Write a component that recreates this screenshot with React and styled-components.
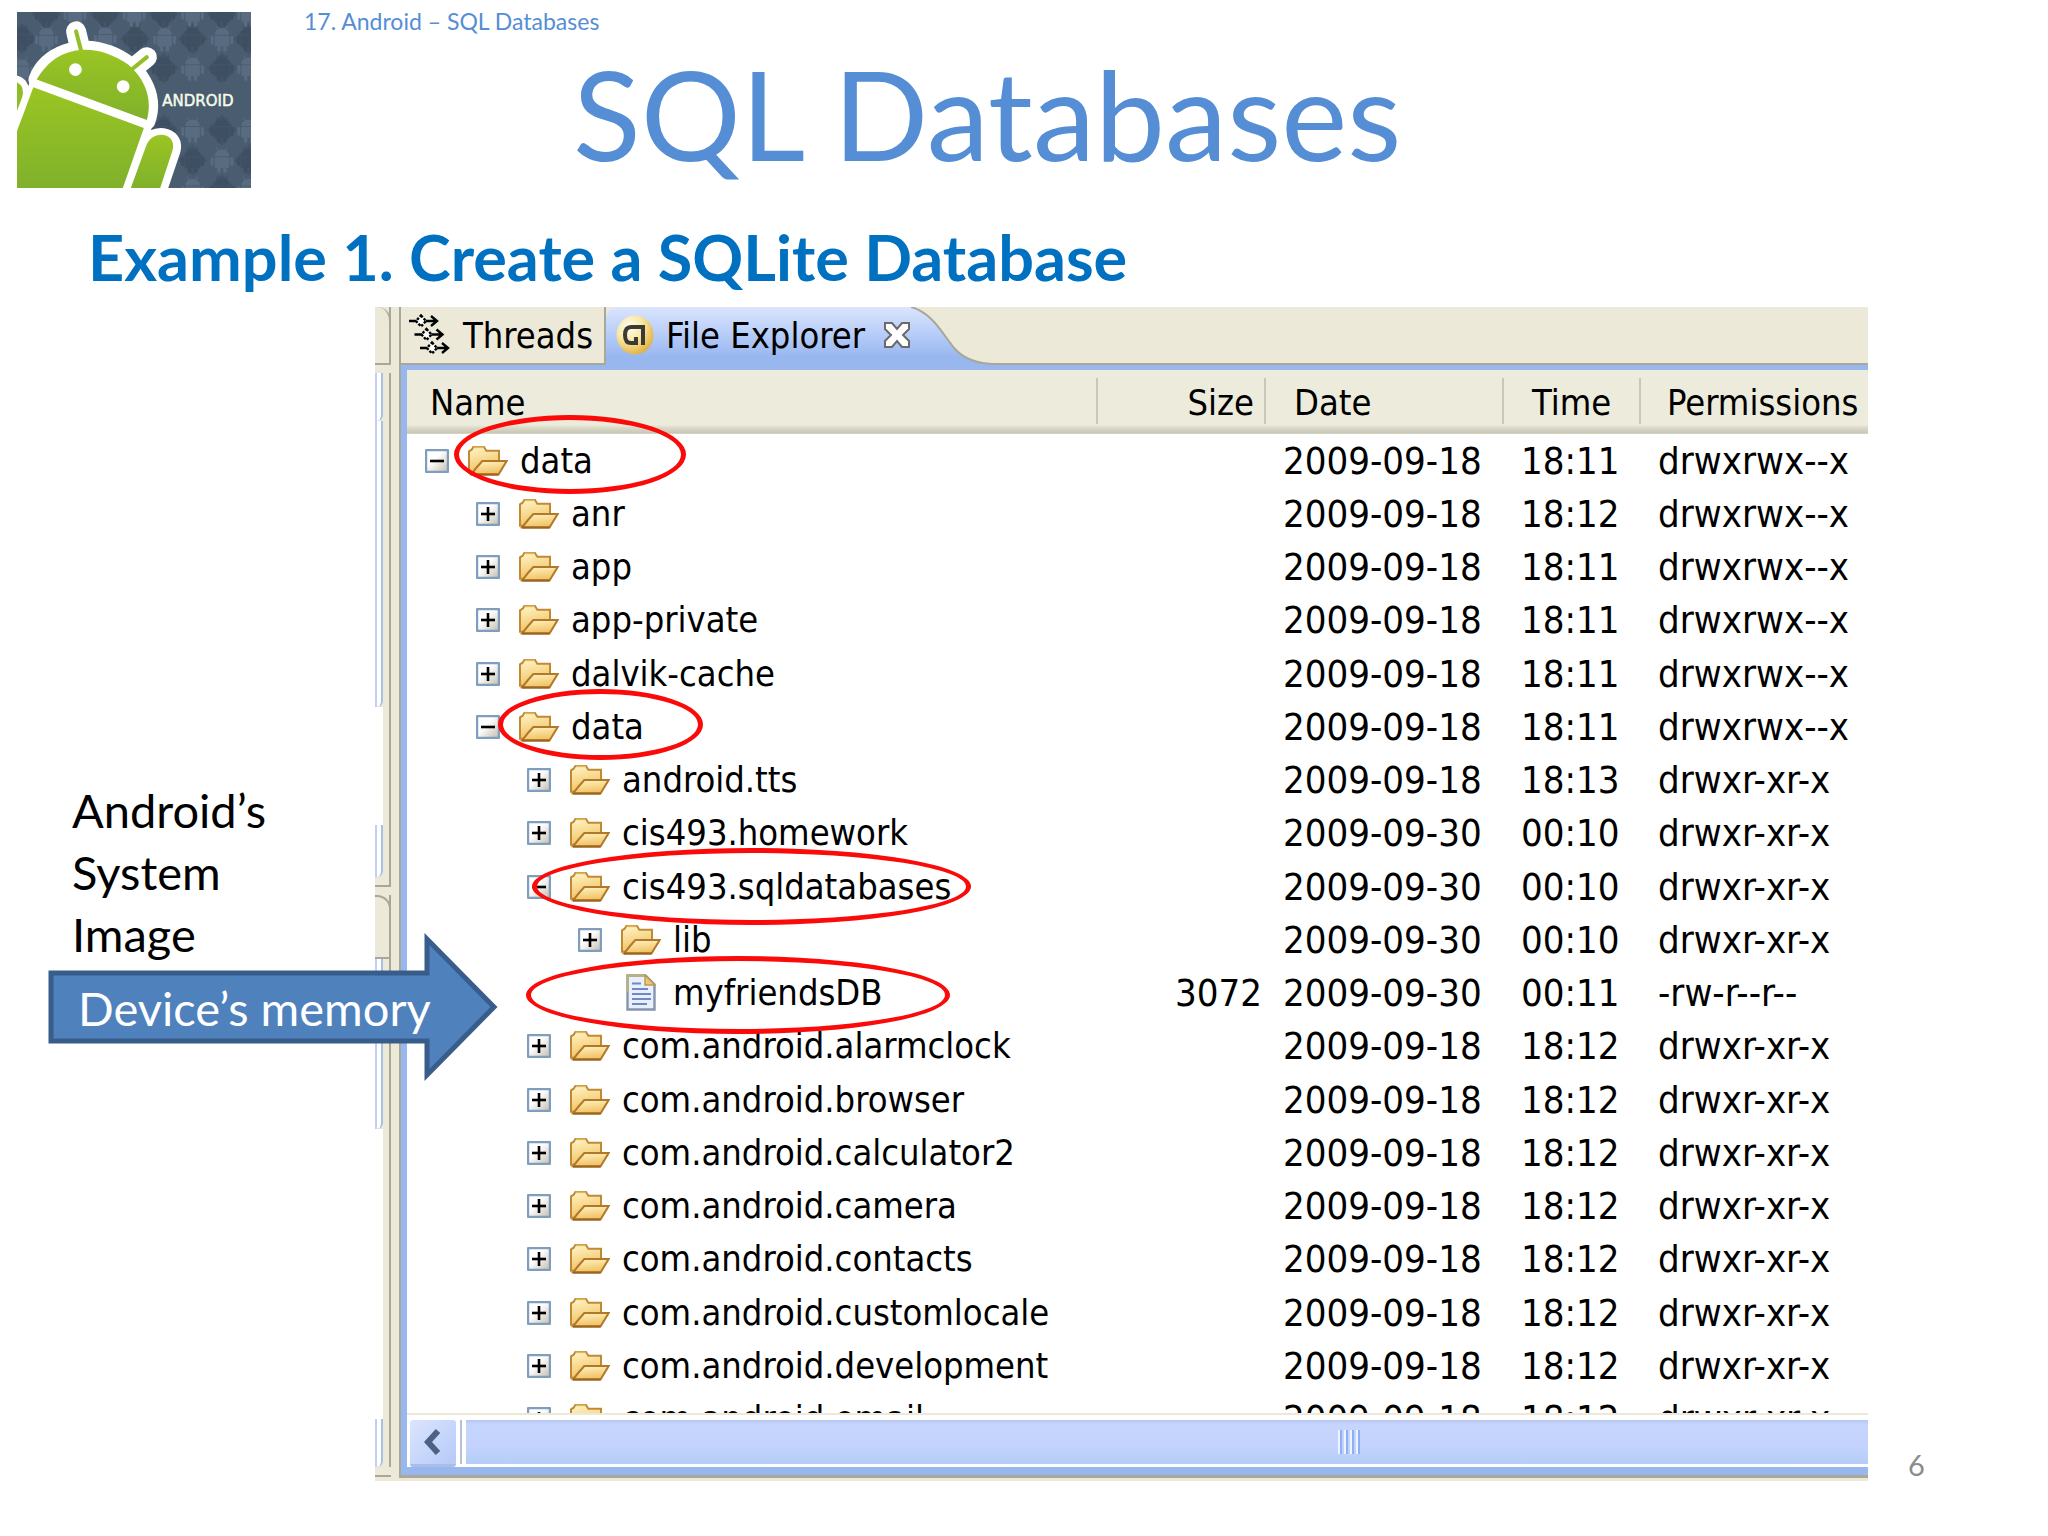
import React, { useState } from "react";
import styled, { createGlobalStyle } from "styled-components";

const GlobalStyle = createGlobalStyle`
  * {
    box-sizing: border-box;
  }
  body {
    margin: 0;
    background: #ffffff;
    font-family: Lato, "Open Sans", sans-serif;
  }
  button {
    font: inherit;
    color: inherit;
    padding: 0;
    border: none;
    background: none;
    cursor: pointer;
  }
`;

const Slide = styled.main`
  position: relative;
  min-height: 100vh;
  overflow: hidden;
`;
const SlideHeader = styled.header`
  display: flex;
  align-items: flex-start;
  padding: 12px 0 0 17px;
  height: 208px;
`;
const HeaderTexts = styled.div`
  flex: 1;
  padding-left: 53px;
`;
const Chapter = styled.p`
  margin: 0;
  font-size: 23px;
  line-height: 18px;
  color: #558ed5;
`;
const Title = styled.h1`
  margin: 0;
  padding-left: 269px;
  font-size: 125px;
  font-weight: 400;
  line-height: 166px;
  white-space: nowrap;
  color: #558ed5;
`;
const Subtitle = styled.h2`
  margin: 0;
  padding-left: 88px;
  height: 99px;
  font-size: 63px;
  font-weight: 700;
  line-height: 98px;
  color: #0070c0;
`;
const Content = styled.div`
  display: flex;
  align-items: stretch;
`;
const Aside = styled.aside`
  flex: 0 0 375px;
  padding: 472px 60px 0 72px;
`;
const Note = styled.p`
  margin: 0;
  font-size: 47px;
  line-height: 62px;
  color: #000000;
`;
const PageNumber = styled.footer`
  flex: 0 0 180px;
  display: flex;
  align-items: flex-end;
  padding-left: 40px;
  font-size: 29px;
  line-height: 32px;
  color: #8c8c8c;
`;

const Arrow = styled.div`
  position: absolute;
  left: 48px;
  top: 932px;
  width: 450px;
  height: 150px;
  display: flex;
  align-items: center;
  svg {
    position: absolute;
    inset: 0;
  }
`;
const ArrowText = styled.span`
  position: relative;
  padding: 2px 0 0 30px;
  font-size: 47px;
  line-height: 60px;
  white-space: nowrap;
  color: #ffffff;
`;

const Screen = styled.section`
  flex: 1;
  min-width: 0;
  display: flex;
  height: 1174px;
  background: #ece9d8;
  font-family: "DejaVu Sans Condensed", "Noto Sans", sans-serif;
  font-size: 36px;
  color: #000000;
`;
const Neighbour = styled.div`
  flex: 0 0 16px;
  display: flex;
  flex-direction: column;
  border-right: 2px solid #a9a797;
  margin: 0 8px 4px 0;
  border-bottom: 2px solid #a9a797;
`;
const NeighbourTab = styled.div`
  flex: 0 0 ${(p) => p.$height}px;
  margin-right: -2px;
  background: #ece9d8;
  border-right: 2px solid #a9a797;
  border-bottom: 2px solid #a9a797;
  border-top: ${(p) => (p.$line ? "2px solid #a9a797" : "none")};
  border-top-right-radius: ${(p) => (p.$square ? "0" : "14px")};
`;
const Track = styled.div`
  flex: ${(p) => (p.$height ? `0 0 ${p.$height}px` : "1")};
  width: 8px;
  background: #ffffff;
`;
const TrackThumb = styled(Track)`
  border-left: 2px solid #c5ccf6;
  border-right: 2px solid #a8c0e4;
  border-bottom-right-radius: 6px;
`;
const Gap = styled.div`
  flex: 0 0 8px;
  margin-right: -2px;
  background: #ece9d8;
`;

const View = styled.div`
  flex: 1;
  min-width: 0;
  display: flex;
  flex-direction: column;
  margin-bottom: 3px;
  border-left: 2px solid #a9a797;
  border-bottom: 3px solid #aca899;
`;
const TabBar = styled.div`
  display: flex;
  height: 58px;
`;
const Tab = styled.button`
  display: flex;
  align-items: center;
  gap: 12px;
  width: 205px;
  padding: 0 0 0 8px;
  border-right: 2px solid #a9a797;
  border-bottom: 2px solid #a9a797;
  border-top-left-radius: 12px;
`;
const ActiveTab = styled.div`
  display: flex;
  align-items: center;
  width: 305px;
  padding: 0 0 2px 10px;
  background: linear-gradient(#dbe5fd, #b5cbf8 50%, #99b7ef 85%);
  border-top-left-radius: 12px;
`;
const TabLabel = styled.button`
  flex: 1;
  display: flex;
  align-items: center;
  gap: 12px;
  white-space: nowrap;
`;
const CloseButton = styled.button`
  display: flex;
`;
const TabTail = styled.svg`
  flex: 0 0 84px;
`;
const TabSpace = styled.div`
  flex: 1;
  border-bottom: 2px solid #a9a797;
`;
const Frame = styled.div`
  flex: 1;
  min-height: 0;
  display: flex;
  flex-direction: column;
  border: solid #99b7ef;
  border-width: 5px 0 8px 6px;
`;
const TableArea = styled.div`
  flex: 1;
  min-height: 0;
  overflow: hidden;
  background: #ffffff;
`;
const Table = styled.table`
  width: 100%;
  table-layout: fixed;
  border-collapse: collapse;
  border-spacing: 0;
`;
const Col = styled.col`
  width: ${(p) => (p.$width ? `${p.$width}px` : "auto")};
`;
const HeadCell = styled.th`
  height: 64px;
  padding: 0 0 2px;
  font-weight: 400;
  text-align: ${(p) => p.$align || "left"};
  background: linear-gradient(#ecebdc 86%, #dcdac8 90%, #c9c7b5 98%, #dddccb);
`;
const HeadLabel = styled.div`
  height: 46px;
  line-height: 50px;
  padding: ${(p) => p.$pad || "0 10px 0 28px"};
  border-right: ${(p) => (p.$last ? "none" : "2px solid #c9c7b8")};
  box-shadow: ${(p) => (p.$last ? "none" : "2px 0 0 #ffffff")};
`;
const Row = styled.tr`
  height: 53px;
  &:nth-child(4n) {
    height: 54px;
  }
`;
const Cell = styled.td`
  padding: ${(p) => p.$pad || "0 0 0 17px"};
  font-size: 38px;
  line-height: 52px;
  white-space: nowrap;
  text-align: ${(p) => p.$align || "left"};
`;
const NameCell = styled(Cell)`
  position: relative;
  padding: 0 0 0 18px;
  font-size: 36px;
`;
const Entry = styled.div`
  display: flex;
  align-items: center;
  margin-left: ${(p) => p.$level * 51}px;
`;
const Toggle = styled.button`
  display: flex;
  width: 24px;
  height: 24px;
  margin-right: 19px;
`;
const ToggleSpace = styled.span`
  width: 43px;
`;
const IconBox = styled.span`
  display: flex;
  justify-content: center;
  width: 40px;
  margin-right: 12px;
`;
const Mark = styled.span`
  position: absolute;
  z-index: 1;
  left: ${(p) => p.$left}px;
  top: ${(p) => p.$top}px;
  width: ${(p) => p.$width}px;
  height: ${(p) => p.$height}px;
  border: 5px solid #fb0a0a;
  border-radius: 50%;
  pointer-events: none;
`;

const ScrollBar = styled.div`
  flex: 0 0 54px;
  display: flex;
  gap: 10px;
  padding: 5px 0 3px 3px;
  border-top: 2px solid #ece9d8;
  background: #ffffff;
`;
const ScrollButton = styled.button`
  display: flex;
  align-items: center;
  justify-content: center;
  width: 46px;
  border-radius: 3px;
  background: linear-gradient(135deg, #dce5fe, #b5c9f8);
  box-shadow: 0 3px 0 #a9bfe6;
`;
const ScrollThumb = styled.div`
  flex: 1;
  display: flex;
  align-items: center;
  justify-content: center;
  gap: 2px;
  padding-left: 25%;
  background: linear-gradient(#b5c6f2, #c6d5fd 10%, #c3d3fd 60%, #b4cdf8);
  box-shadow: -4px 0 0 #ffffff, -6px 0 0 #b4c2d8;
`;
const Grip = styled.span`
  width: 4px;
  height: 24px;
  border-left: 2px solid #eef4fe;
  border-right: 2px solid #8cb0f8;
`;

const entries = [
  { name: "data", level: 0, open: true, time: "18:11", perm: "drwxrwx--x", mark: [47, -19, 232, 79] },
  { name: "anr", level: 1, time: "18:12", perm: "drwxrwx--x" },
  { name: "app", level: 1, time: "18:11", perm: "drwxrwx--x" },
  { name: "app-private", level: 1, time: "18:11", perm: "drwxrwx--x" },
  { name: "dalvik-cache", level: 1, time: "18:11", perm: "drwxrwx--x" },
  { name: "data", level: 1, open: true, time: "18:11", perm: "drwxrwx--x", mark: [91, -11, 205, 71] },
  { name: "android.tts", level: 2, time: "18:13", perm: "drwxr-xr-x" },
  { name: "cis493.homework", level: 2, date: "2009-09-30", time: "00:10", perm: "drwxr-xr-x" },
  { name: "cis493.sqldatabases", level: 2, open: true, date: "2009-09-30", time: "00:10", perm: "drwxr-xr-x", mark: [125, -12, 439, 77] },
  { name: "lib", level: 3, date: "2009-09-30", time: "00:10", perm: "drwxr-xr-x" },
  { name: "myfriendsDB", level: 3, file: true, size: "3072", date: "2009-09-30", time: "00:11", perm: "-rw-r--r--", mark: [119, -10, 424, 78] },
  { name: "com.android.alarmclock", level: 2, time: "18:12", perm: "drwxr-xr-x" },
  { name: "com.android.browser", level: 2, time: "18:12", perm: "drwxr-xr-x" },
  { name: "com.android.calculator2", level: 2, time: "18:12", perm: "drwxr-xr-x" },
  { name: "com.android.camera", level: 2, time: "18:12", perm: "drwxr-xr-x" },
  { name: "com.android.contacts", level: 2, time: "18:12", perm: "drwxr-xr-x" },
  { name: "com.android.customlocale", level: 2, time: "18:12", perm: "drwxr-xr-x" },
  { name: "com.android.development", level: 2, time: "18:12", perm: "drwxr-xr-x" },
  { name: "com.android.email", level: 2, time: "18:12", perm: "drwxr-xr-x" },
];

function ToggleIcon({ open }) {
  return (
    <svg width="24" height="24" viewBox="0 0 24 24">
      <defs>
        <linearGradient id="toggleFill" x1="0" y1="0" x2="1" y2="1">
          <stop offset="0.4" stopColor="#ffffff" />
          <stop offset="1" stopColor="#c3bcae" />
        </linearGradient>
      </defs>
      <rect x="1" y="1" width="22" height="22" rx="1" fill="url(#toggleFill)" stroke="#7f9dbc" strokeWidth="2.4" />
      <path d="M5 12h14" stroke="#000" strokeWidth="2.6" />
      {!open && <path d="M12 5v14" stroke="#000" strokeWidth="2.6" />}
    </svg>
  );
}

function FolderIcon() {
  return (
    <svg width="40" height="30" viewBox="0 0 120 90">
      <defs>
        <linearGradient id="folderFill" x1="0" y1="0" x2="0.3" y2="1">
          <stop offset="0" stopColor="#fff6c8" />
          <stop offset="1" stopColor="#f2c264" />
        </linearGradient>
      </defs>
      <path d="M3 80V16l8-5 5-8h32l7 11h38v66z" fill="url(#folderFill)" stroke="#c08a35" strokeWidth="6" />
      <path d="M17 4h30" stroke="#e0b860" strokeWidth="5" />
      <path d="M9 85l18-22 16-18h73L92 85z" fill="url(#folderFill)" stroke="#b07828" strokeWidth="6" />
      <path d="M9 86h83" stroke="#9a6420" strokeWidth="6" />
    </svg>
  );
}

function FileIcon() {
  return (
    <svg width="30" height="37" viewBox="0 0 30 37">
      <path d="M1.5 1.5h18l9 9v25h-27z" fill="#e9f0fc" stroke="#8594ae" strokeWidth="2.4" />
      <path d="M1.5 18V1.5h18" fill="none" stroke="#b9b27e" strokeWidth="2.4" />
      <path d="M19 1v10h10z" fill="#e8c878" stroke="#b99b54" strokeWidth="1.5" />
      <path d="M6 9.500h9M6 15h16M6 20h19M6 25h19M6 30h15" stroke="#7088c4" strokeWidth="2.2" />
    </svg>
  );
}

function ThreadsIcon() {
  return (
    <svg width="42" height="42" viewBox="0 0 42 42" fill="none" stroke="#000" strokeWidth="2.4">
      {[0, 1, 2].map((i) => (
        <g key={i} transform={`translate(${i * 5.5} ${i * 13.5})`}>
          <path d="M0 7h8M16 7h12M22 2l6 5-6 5" />
          <path d="M12 1.500l5 5.500-5 5.500-5-5.500z" fill="#fff" strokeDasharray="2.500 1.500" />
        </g>
      ))}
    </svg>
  );
}

function ExplorerIcon() {
  return (
    <svg width="38" height="40" viewBox="0 0 38 40">
      <defs>
        <radialGradient id="orb" cx="0.35" cy="0.3" r="0.75">
          <stop offset="0" stopColor="#fffef0" />
          <stop offset="0.5" stopColor="#f8e6a0" />
          <stop offset="1" stopColor="#e2ae3c" />
        </radialGradient>
      </defs>
      <ellipse cx="19" cy="20" rx="18.500" ry="19.500" fill="url(#orb)" />
      <path d="M27 30V12H15q-6 0-6 8t6 8h5v-6" fill="none" stroke="#3d3a35" strokeWidth="4" />
    </svg>
  );
}

function CloseIcon() {
  return (
    <svg width="28" height="28" viewBox="0 0 28 28">
      <path
        d="M2 2h7l5 6 5-6h7v6l-6 6 6 6v6h-7l-5-6-5 6H2v-6l6-6-6-6z"
        fill="#fff"
        stroke="#6c6a66"
        strokeWidth="2"
      />
    </svg>
  );
}

const lightDroids = [
  [109, 102], [285, 100], [463, 102], [635, 102], [195, 28], [372, 28], [547, 28], [715, 28],
  [547, 190], [715, 190], [547, 375], [715, 375], [635, 465], [547, 552], [715, 552], [35, 195],
];
const darkDroids = [
  [375, 102], [547, 102], [715, 102], [460, 190], [635, 190], [635, 375], [460, 375], [547, 465],
  [715, 465], [635, 552], [35, 100], [109, 28], [285, 28], [460, 28], [635, 28],
];

function MiniDroid({ x, y, fill }) {
  return (
    <g transform={`translate(${x} ${y})`} fill={fill}>
      <path d="M-22-12a22 20 0 0 1 44 0z" />
      <path d="M-16-38l6 10M16-38l-6 10" stroke={fill} strokeWidth="3" />
      <rect x="-22" y="-9" width="44" height="32" rx="4" />
      <rect x="-34" y="-9" width="9" height="26" rx="4" />
      <rect x="25" y="-9" width="9" height="26" rx="4" />
      <rect x="-14" y="20" width="10" height="18" rx="4" />
      <rect x="4" y="20" width="10" height="18" rx="4" />
    </g>
  );
}

function AndroidLogo() {
  return (
    <svg width="234" height="176" viewBox="21 22 701 526" preserveAspectRatio="none" role="img" aria-label="Android">
      <defs>
        <linearGradient id="droid" x1="0" y1="0" x2="0" y2="1">
          <stop offset="0" stopColor="#9ac523" />
          <stop offset="1" stopColor="#80b12b" />
        </linearGradient>
      </defs>
      <rect x="21" y="22" width="701" height="526" fill="#4a5c70" />
      {darkDroids.map(([x, y]) => (
        <g key={`${x}-${y}`}>
          <path d={`M${x} ${y - 46}l44 46-44 46-44-46z`} fill="#435468" />
          <MiniDroid x={x} y={y} fill="#3f4f62" />
        </g>
      ))}
      {lightDroids.map(([x, y]) => (
        <MiniDroid key={`${x}-${y}`} x={x} y={y} fill="#586b81" />
      ))}
      <g stroke="#fff" fill="none" strokeLinecap="round">
        <path d="M198 80l17 70M410 157l-52 42" strokeWidth="60" />
        <path d="M78 224A178 152 20.800 0 1 412 350z" fill="#fff" strokeWidth="46" strokeLinejoin="round" />
        <path d="M70 240L0 420V580H350L412 365z" fill="#fff" strokeWidth="26" />
        <path d="M350 580L408 420C425 378 500 385 487 435L438 580z" fill="#fff" strokeWidth="48" />
        <path d="M0 226Q48 226 38 275L0 370" fill="#fff" strokeWidth="34" />
      </g>
      <path d="M198 80l17 65M410 157l-52 42" stroke="#93be28" strokeWidth="12" strokeLinecap="round" />
      <path d="M80 224C135 125 250 105 355 180C412 230 425 290 410 345z" fill="url(#droid)" />
      <path d="M70 247L401 369L338 548H21V378z" fill="url(#droid)" />
      <path d="M362 548L408 422C426 370 502 382 487 435L450 548z" fill="url(#droid)" />
      <path d="M21 232Q46 245 36 278L21 318z" fill="#8fbd27" />
      <circle cx="196" cy="194" r="19" fill="#fff" />
      <circle cx="339" cy="245" r="19" fill="#fff" />
      <text x="456" y="302" fontFamily="DejaVu Sans, sans-serif" fontSize="45" fill="#f4fbe6" stroke="#f4fbe6" strokeWidth="1.5">
        ANDROID
      </text>
    </svg>
  );
}

function FileRow({ entry }) {
  const [open, setOpen] = useState(Boolean(entry.open));
  const { name, level, file, size, date = "2009-09-18", time, perm, mark } = entry;

  return (
    <Row>
      <NameCell>
        <Entry $level={level}>
          {file ? (
            <ToggleSpace />
          ) : (
            <Toggle
              aria-label={`${open ? "Collapse" : "Expand"} ${name}`}
              aria-expanded={open}
              onClick={() => setOpen(!open)}
            >
              <ToggleIcon open={open} />
            </Toggle>
          )}
          <IconBox>{file ? <FileIcon /> : <FolderIcon />}</IconBox>
          {name}
        </Entry>
        {mark && <Mark $left={mark[0]} $top={mark[1]} $width={mark[2]} $height={mark[3]} />}
      </NameCell>
      <Cell $align="right" $pad="0 4px 0 0">
        {size}
      </Cell>
      <Cell>{date}</Cell>
      <Cell>{time}</Cell>
      <Cell>{perm}</Cell>
    </Row>
  );
}

export default function App() {
  return (
    <Slide>
      <GlobalStyle />
      <SlideHeader>
        <AndroidLogo />
        <HeaderTexts>
          <Chapter>17. Android – SQL Databases</Chapter>
          <Title>SQL Databases</Title>
        </HeaderTexts>
      </SlideHeader>
      <Subtitle>Example 1. Create a SQLite Database</Subtitle>
      <Content>
        <Aside>
          <Note>
            Android’s
            <br />
            System
            <br />
            Image
          </Note>
        </Aside>
        <Screen>
          <Neighbour>
            <NeighbourTab $height={58} />
            <Gap />
            <TrackThumb $height={48} />
            <TrackThumb $height={286} />
            <Track $height={118} />
            <TrackThumb $height={52} />
            <NeighbourTab $height={10} $square />
            <Gap />
            <NeighbourTab $height={64} $line />
            <TrackThumb $height={170} />
            <Track />
            <TrackThumb $height={48} />
            <Gap />
          </Neighbour>
          <View>
            <TabBar>
              <Tab>
                <ThreadsIcon />
                Threads
              </Tab>
              <ActiveTab>
                <TabLabel>
                  <ExplorerIcon />
                  File Explorer
                </TabLabel>
                <CloseButton aria-label="Close">
                  <CloseIcon />
                </CloseButton>
              </ActiveTab>
              <TabTail width="84" height="58" viewBox="0 0 84 58">
                <defs>
                  <linearGradient id="tail" x1="0" y1="0" x2="0" y2="1">
                    <stop offset="0" stopColor="#dbe5fd" />
                    <stop offset="0.5" stopColor="#b5cbf8" />
                    <stop offset="0.85" stopColor="#99b7ef" />
                  </linearGradient>
                </defs>
                <path d="M0 0C22 6 32 28 44 42Q58 57 84 57V58H0z" fill="url(#tail)" />
                <path d="M0 0C22 6 32 28 44 42Q58 57 84 57" fill="none" stroke="#a9a797" strokeWidth="2" />
              </TabTail>
              <TabSpace />
            </TabBar>
            <Frame>
              <TableArea>
                <Table>
                  <colgroup>
                    <Col />
                    <Col $width={168} />
                    <Col $width={238} />
                    <Col $width={137} />
                    <Col $width={227} />
                  </colgroup>
                  <thead>
                    <tr>
                      <HeadCell>
                        <HeadLabel $pad="0 0 0 23px">Name</HeadLabel>
                      </HeadCell>
                      <HeadCell $align="right">
                        <HeadLabel>Size</HeadLabel>
                      </HeadCell>
                      <HeadCell>
                        <HeadLabel>Date</HeadLabel>
                      </HeadCell>
                      <HeadCell>
                        <HeadLabel>Time</HeadLabel>
                      </HeadCell>
                      <HeadCell>
                        <HeadLabel $last $pad="0 0 0 26px">
                          Permissions
                        </HeadLabel>
                      </HeadCell>
                    </tr>
                  </thead>
                  <tbody>
                    {entries.map((entry, i) => (
                      <FileRow key={i} entry={entry} />
                    ))}
                  </tbody>
                </Table>
              </TableArea>
              <ScrollBar>
                <ScrollButton aria-label="Scroll left">
                  <svg width="18" height="26" viewBox="0 0 18 26">
                    <path d="M14 2L4 13l10 11" fill="none" stroke="#4d6185" strokeWidth="6" />
                  </svg>
                </ScrollButton>
                <ScrollThumb>
                  <Grip />
                  <Grip />
                  <Grip />
                  <Grip />
                </ScrollThumb>
              </ScrollBar>
            </Frame>
          </View>
        </Screen>
        <PageNumber>6</PageNumber>
      </Content>
      <Arrow>
        <svg width="450" height="150" viewBox="0 0 450 150">
          <path
            d="M3 41H379V7L446 75L379 143V109H3z"
            fill="#4f81bd"
            stroke="#385d8a"
            strokeWidth="5"
          />
        </svg>
        <ArrowText>Device’s memory</ArrowText>
      </Arrow>
    </Slide>
  );
}
